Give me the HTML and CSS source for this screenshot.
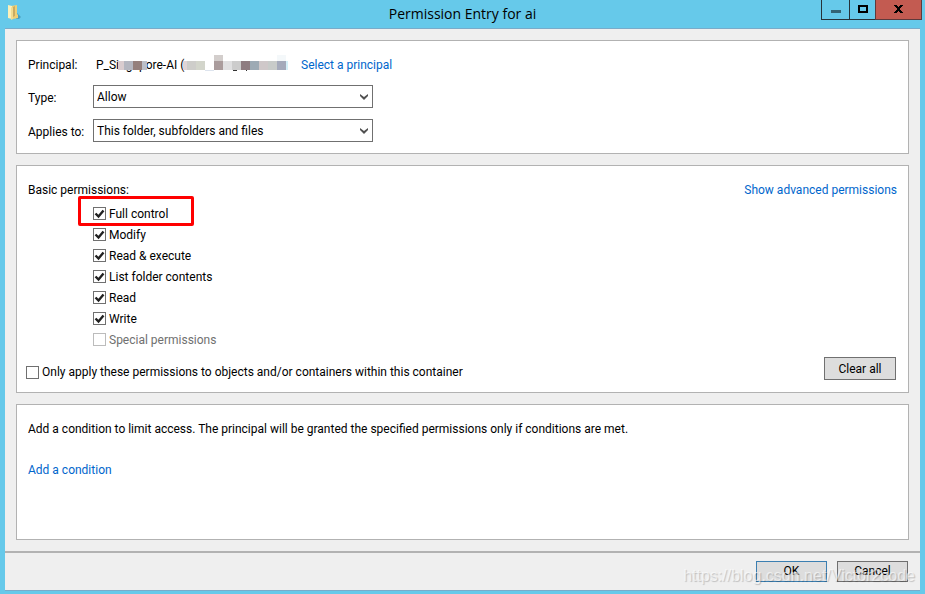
FILE: index.html
```html
<!doctype html>
<html lang="en">
    <head>
        <meta charset="utf-8">
        <title>Permission Entry for ai</title>
        <link rel="stylesheet" href="styles.css">
    </head>
    <body>
        <header class="titlebar">
            <svg class="folder-icon" width="15" height="18" viewBox="0 0 15 18">
                <path d="M10 9l4 4-2 2h-3z" fill="#3f8fae" opacity=".7"/>
                <path d="M4 2l6-1v9l1 1v3l-5 1z" fill="#f0cf74"/>
                <path d="M6 3l2-1v10l-2 1z" fill="#c9ab63"/>
                <path d="M1 1l4 1v13l-4-1z" fill="#fdf0b8"/>
                <path d="M4 3l2 1v11l-2 1z" fill="#f2dc90"/>
            </svg>
            <h1>Permission Entry for ai</h1>
            <div class="window-buttons">
                <button class="win-min" aria-label="Minimize">
                    <svg width="10" height="9" viewBox="0 0 10 9"><path d="M0 5h10v3H0z" fill="#336475"/></svg>
                </button>
                <button class="win-max" aria-label="Maximize">
                    <svg width="10" height="9" viewBox="0 0 10 9"><path d="M1 1h8v6H1z" fill="none" stroke="#000" stroke-width="2"/></svg>
                </button>
                <button class="win-close" aria-label="Close">
                    <svg width="9" height="8" viewBox="0 0 9 8"><path d="M0 0h3v1h1v1h1v-1h1v-1h3v1h-1v1h-1v1h-1v2h1v1h1v1h1v1h-3v-1h-1v-1h-1v1h-1v1h-3v-1h1v-1h1v-1h1v-2h-1v-1h-1v-1h-1z" fill="#000"/></svg>
                </button>
            </div>
        </header>

        <main>
            <section class="panel fields">
                <span>Principal:</span>
                <div class="principal">
                    <span class="principal-name">P_Singapore-AI (
                        <svg class="mosaic" width="193" height="16" viewBox="0 0 193 16" shape-rendering="crispEdges">
                            <path d="M22 6h6v9h-6z" fill="#d9cccf"/>
                            <path d="M28 6h9v9h-9z" fill="#b4b6c0"/>
                            <path d="M37 6h9v9h-9z" fill="#947f7c"/>
                            <path d="M46 6h5v9h-5z" fill="#bcbfc8"/>
                            <path d="M87 6h4v9h-4z" fill="#e0d4d6"/>
                            <path d="M91 6h9v9h-9z" fill="#cecdca"/>
                            <path d="M100 6h9v9h-9z" fill="#d3d5cb"/>
                            <path d="M109 15h9v1h-9z" fill="#dde4ee"/>
                            <path d="M118 0h9v6h-9z" fill="#d3cecc"/>
                            <path d="M118 6h9v9h-9z" fill="#aa9c9c"/>
                            <path d="M127 6h9v9h-9z" fill="#e0e0e1"/>
                            <path d="M136 6h9v9h-9z" fill="#cccccc"/>
                            <path d="M137 15h4v1h-4zM150 15h1v1h-1z" fill="#333"/>
                            <path d="M145 6h9v9h-9z" fill="#8e7c80"/>
                            <path d="M154 6h9v9h-9z" fill="#9daab4"/>
                            <path d="M163 6h9v9h-9z" fill="#cfc8c9"/>
                            <path d="M172 6h9v9h-9z" fill="#c8cbc9"/>
                            <path d="M181 0h9v6h-9z" fill="#f4f8fa"/>
                            <path d="M181 6h9v9h-9z" fill="#a5aabb"/>
                            <path d="M190 6h2v9h-2z" fill="#d4eff8"/>
                        </svg>
                    </span>
                    <a href="#">Select a principal</a>
                </div>

                <label for="type">Type:</label>
                <select id="type">
                    <option>Allow</option>
                    <option>Deny</option>
                </select>

                <label for="applies">Applies to:</label>
                <select id="applies">
                    <option>This folder, subfolders and files</option>
                    <option>This folder only</option>
                </select>
            </section>

            <section class="panel">
                <div class="row">
                    <span>Basic permissions:</span>
                    <a href="#">Show advanced permissions</a>
                </div>
                <ul class="permissions">
                    <li class="marked"><label><input type="checkbox" checked>Full control</label></li>
                    <li><label><input type="checkbox" checked>Modify</label></li>
                    <li><label><input type="checkbox" checked>Read &amp; execute</label></li>
                    <li><label><input type="checkbox" checked>List folder contents</label></li>
                    <li><label><input type="checkbox" checked>Read</label></li>
                    <li><label><input type="checkbox" checked>Write</label></li>
                    <li><label class="disabled"><input type="checkbox" disabled>Special permissions</label></li>
                </ul>
                <div class="row apply-row">
                    <label><input type="checkbox">Only apply these permissions to objects and/or containers within this container</label>
                    <button class="btn">Clear all</button>
                </div>
            </section>

            <section class="panel conditions">
                <p>Add a condition to limit access. The principal will be granted the specified permissions only if conditions are met.</p>
                <a href="#">Add a condition</a>
            </section>
        </main>

        <footer>
            <button class="btn btn-default">OK</button>
            <button class="btn">Cancel</button>
            <span class="watermark">https://blog.csdn.net/Victor2code</span>
        </footer>
    </body>
</html>
```
FILE: styles.css
```css
:root {
    --frame: #66c9ea;
    --frame-line: #7aabc9;
    --window-bg: #efefef;
    --panel-border: #b2b2b2;
    --control-border: #707070;
    --link: #0066cc;
}

*,
*::before {
    box-sizing: border-box;
}

body {
    margin: 0;
    min-height: 100vh;
    display: flex;
    flex-direction: column;
    padding: 0 5px 3px;
    background: var(--frame);
    color: #000;
    font-family: Roboto, "Open Sans", sans-serif;
    font-size: 12px;
    line-height: 16px;
}

a {
    color: var(--link);
    text-decoration: none;
}

button,
select {
    font: inherit;
    color: inherit;
}

/* title bar */
.titlebar {
    position: relative;
    display: flex;
    align-items: center;
    justify-content: center;
    height: 28px;
}

.titlebar h1 {
    margin: 0;
    font-family: "Open Sans", sans-serif;
    font-size: 14px;
    line-height: 28px;
    font-weight: 400;
}

.folder-icon {
    position: absolute;
    left: 2px;
    top: 4px;
}

.window-buttons {
    position: absolute;
    top: 0;
    right: -2px;
    display: flex;
}

.window-buttons button {
    display: flex;
    align-items: center;
    justify-content: center;
    height: 20px;
    padding: 0 0 1px;
    border: 1px solid #26323a;
    border-top: none;
    border-right: none;
    background: none;
}

.win-min {
    width: 28px;
}

.win-max {
    width: 26px;
}

.window-buttons .win-close {
    width: 47px;
    background: #c35b51;
    border-color: #5d3a3c;
    border-right: 1px solid #5d3a3c;
}

/* content */
main {
    flex: 1;
    display: flex;
    flex-direction: column;
    gap: 11px;
    padding: 11px;
    background: var(--window-bg);
    border-top: 1px solid var(--frame-line);
}

.panel {
    padding: 12px 11px;
    background: #fff;
    border: 1px solid var(--panel-border);
}

.fields {
    display: grid;
    grid-template-columns: 65px 1fr;
    row-gap: 11px;
    align-items: center;
    padding-top: 14px;
    padding-bottom: 11px;
}

.principal {
    display: flex;
    gap: 12px;
    padding: 2px 3px 1px;
}

.principal-name {
    position: relative;
    width: 193px;
}

.mosaic {
    position: absolute;
    left: 0;
    top: -2px;
}

.fields label {
    padding-top: 2px;
}

select {
    appearance: none;
    width: 280px;
    height: 23px;
    padding: 0 3px;
    border: 1px solid var(--control-border);
    border-radius: 0;
    background: #fff url("data:image/svg+xml,%3Csvg xmlns='http://www.w3.org/2000/svg' width='8' height='6'%3E%3Cpath d='M0 0l4 3 4-3v2L4 6 0 2z' fill='%23505050'/%3E%3C/svg%3E") no-repeat right 4px center;
}

.row {
    display: flex;
    align-items: center;
    justify-content: space-between;
    min-height: 24px;
}

.permissions {
    list-style: none;
    margin: 1px 0 7px;
    padding: 0 0 0 65px;
}

.permissions li {
    position: relative;
    height: 21px;
}

.row label,
.permissions label {
    display: inline-flex;
    align-items: center;
    gap: 3px;
    height: 21px;
}

.disabled {
    color: #707070;
}

input[type=checkbox] {
    appearance: none;
    width: 13px;
    height: 13px;
    margin: 0;
    border: 1px solid var(--control-border);
    background: #fff;
}

input[type=checkbox]:checked {
    background: url("data:image/svg+xml,%3Csvg xmlns='http://www.w3.org/2000/svg' width='11' height='11'%3E%3Cpath d='M1.5 5.5l3 3L9.5 2.5' fill='none' stroke='%23212121' stroke-width='2.4'/%3E%3C/svg%3E") center no-repeat;
}

input[type=checkbox]:disabled {
    border-color: #bcbcbc;
}

/* red frame round the important permission */
.marked::before {
    content: "";
    position: absolute;
    left: -15px;
    top: -7px;
    width: 116px;
    height: 30px;
    border: 3px solid #ff0000;
    border-radius: 2px;
    pointer-events: none;
}

.apply-row {
    min-height: 23px;
    margin-left: -2px;
    padding-right: 1px;
}

.apply-row label {
    padding-top: 7px;
}

.btn {
    min-width: 72px;
    height: 23px;
    padding: 0 8px;
    border: 1px solid var(--control-border);
    background: #dddddd;
}

.btn-default {
    border-color: #3c7fb1;
}

.conditions {
    flex: 1;
}

.conditions p {
    margin: 4px 0 25px;
}

footer {
    position: relative;
    display: flex;
    justify-content: flex-end;
    gap: 10px;
    padding: 8px 12px;
    background: var(--window-bg);
    border-top: 2px solid var(--panel-border);
    border-bottom: 1px solid var(--frame-line);
}

footer .btn {
    min-width: 71px;
    height: 21px;
    line-height: 19px;
}

.watermark {
    position: absolute;
    right: 5px;
    bottom: 5px;
    color: rgba(255, 255, 255, 0.6);
    font: 16px/18px "Liberation Sans", sans-serif;
    text-shadow: 1px 1px 1px rgba(0, 0, 0, 0.2);
    pointer-events: none;
}
```
